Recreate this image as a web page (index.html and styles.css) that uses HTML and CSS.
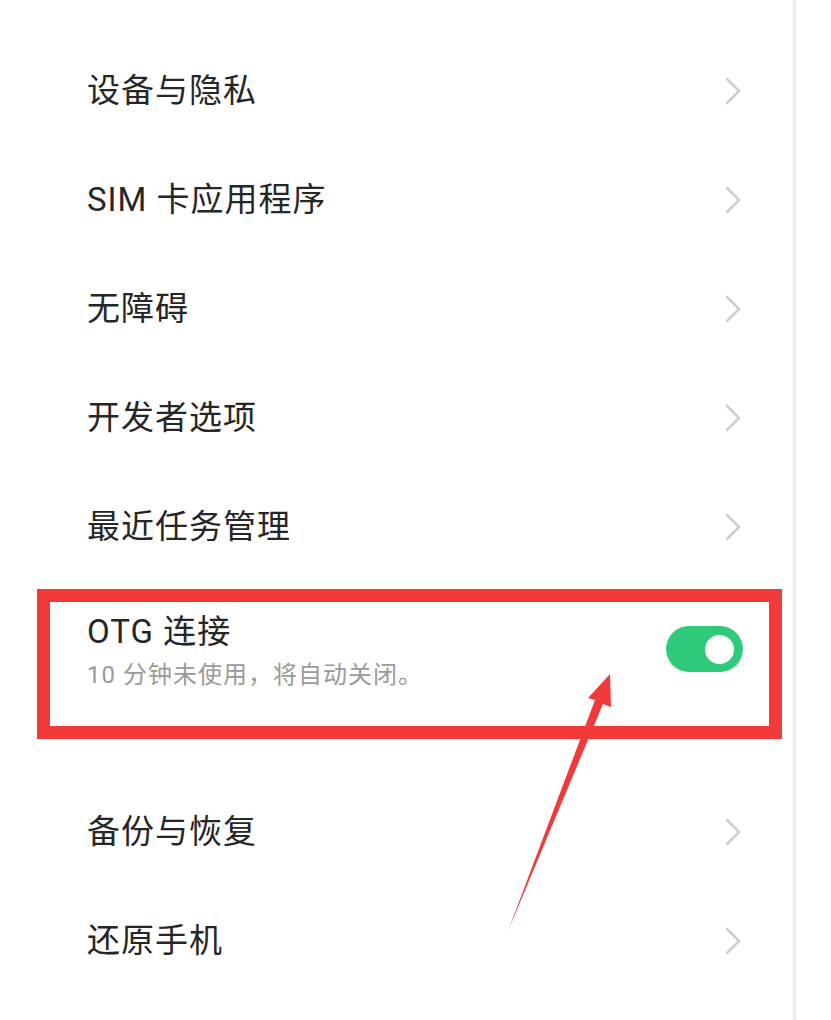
FILE: index.html
```html
<!DOCTYPE html>
<html lang="zh-CN">
<head>
<meta charset="utf-8">
<title>其他设置</title>
<link rel="stylesheet" href="styles.css">
</head>
<body>
<main class="settings">
  <ul class="list">
    <li class="row">
      <span class="label">设备与隐私</span>
      <svg class="chevron" viewBox="0 0 20 30"><path d="M4 3 L16 15 L4 27"/></svg>
    </li>
    <li class="row">
      <span class="label">SIM 卡应用程序</span>
      <svg class="chevron" viewBox="0 0 20 30"><path d="M4 3 L16 15 L4 27"/></svg>
    </li>
    <li class="row">
      <span class="label">无障碍</span>
      <svg class="chevron" viewBox="0 0 20 30"><path d="M4 3 L16 15 L4 27"/></svg>
    </li>
    <li class="row">
      <span class="label">开发者选项</span>
      <svg class="chevron" viewBox="0 0 20 30"><path d="M4 3 L16 15 L4 27"/></svg>
    </li>
    <li class="row">
      <span class="label">最近任务管理</span>
      <svg class="chevron" viewBox="0 0 20 30"><path d="M4 3 L16 15 L4 27"/></svg>
    </li>
    <li class="row row-otg">
      <div class="texts">
        <span class="label">OTG 连接</span>
        <span class="sub">10 分钟未使用，将自动关闭。</span>
      </div>
      <span class="switch on"><span class="knob"></span></span>
    </li>
    <li class="row">
      <span class="label">备份与恢复</span>
      <svg class="chevron" viewBox="0 0 20 30"><path d="M4 3 L16 15 L4 27"/></svg>
    </li>
    <li class="row">
      <span class="label">还原手机</span>
      <svg class="chevron" viewBox="0 0 20 30"><path d="M4 3 L16 15 L4 27"/></svg>
    </li>
  </ul>

  <!-- highlight frame and pointer drawn over the OTG row -->
  <div class="mark-box"></div>
  <svg class="mark-arrow" viewBox="0 0 831 1020">
    <polygon points="508,931 595,700 588,698 610,674 611,707 603,704"/>
  </svg>
</main>
</body>
</html>
```

FILE: styles.css
```css
html, body {
  margin: 0;
  padding: 0;
  background: #ffffff;
}

body {
  width: 831px;
  height: 1020px;
  overflow: hidden;
  font-family: Roboto, "Noto Sans CJK SC", sans-serif;
}

.settings {
  position: relative;
  width: 793px;
  height: 1020px;
  border-right: 3px solid #ededed;
}

.list {
  list-style: none;
  margin: 0;
  padding: 36px 0 0;
}

.row {
  display: flex;
  align-items: center;
  justify-content: space-between;
  height: 109px;
  padding: 0 50px 0 87px;
}

.label {
  font-size: 33px;
  line-height: 40px;
  letter-spacing: 1px;
  color: #262626;
}

.chevron {
  width: 20px;
  height: 30px;
  fill: none;
  stroke: #cfcfcf;
  stroke-width: 2.6;
  stroke-linecap: round;
  stroke-linejoin: round;
}

.row-otg {
  height: auto;
  align-items: flex-start;
  padding-top: 31px;
  padding-bottom: 87px;
}

.texts {
  display: flex;
  flex-direction: column;
}

.sub {
  margin-top: 8px;
  font-size: 24px;
  line-height: 30px;
  letter-spacing: 1px;
  color: #9a9a9a;
}

.switch {
  display: flex;
  align-items: center;
  justify-content: flex-end;
  width: 77px;
  height: 46px;
  margin-top: 14px;
  padding-right: 9px;
  box-sizing: border-box;
  border-radius: 23px;
  background: #2fcb7a;
}

.knob {
  width: 29px;
  height: 29px;
  border-radius: 50%;
  background: #ffffff;
}

.mark-box {
  position: absolute;
  left: 37px;
  top: 589px;
  width: 745px;
  height: 150px;
  box-sizing: border-box;
  border: 13px solid #f23a3a;
}

.mark-arrow {
  position: absolute;
  left: 0;
  top: 0;
  width: 831px;
  height: 1020px;
  fill: #f23a3a;
  pointer-events: none;
}
```
